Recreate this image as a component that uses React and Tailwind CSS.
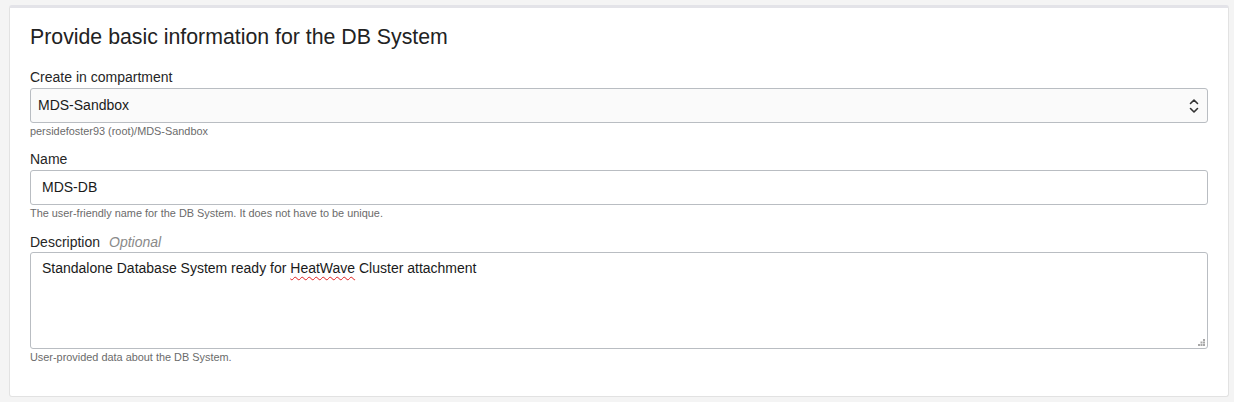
export default function App() {
  const font = { fontFamily: '"Liberation Sans", Arial, sans-serif' };
  return (
    <div className="w-[1234px] h-[402px] bg-[#f4f4f4] pt-[5px] pl-[9px]" style={font}>
      <div className="w-[1220px] h-[392px] bg-white border border-[#e2e2e2] border-t-[3px] border-t-[#e3e3e8] rounded-[3px] px-[20px] pt-[17px]">
        <h2 className="text-[21.3px] leading-[24px] text-[#222] font-normal">Provide basic information for the DB System</h2>

        <div className="mt-[19px] text-[14px] leading-[18px] text-[#262626]">Create in compartment</div>
        <div className="mt-[2px] h-[35px] border border-[#b9bdc2] rounded-[3px] bg-[#fafafa] flex items-center justify-between pl-[7px] pr-[8px]">
          <span className="text-[14px] text-[#1a1a1a]">MDS-Sandbox</span>
          <svg width="10" height="16" viewBox="0 0 10 16" fill="none" stroke="#333" strokeWidth="1.6" strokeLinecap="round" strokeLinejoin="round">
            <path d="M1.5 5.5 L5 2 L8.5 5.5" />
            <path d="M1.5 10.5 L5 14 L8.5 10.5" />
          </svg>
        </div>
        <div className="mt-[2px] text-[10.9px] leading-[13px] text-[#6b6b6b]">persidefoster93 (root)/MDS-Sandbox</div>

        <div className="mt-[12px] text-[14px] leading-[18px] text-[#262626]">Name</div>
        <div className="mt-[2px] h-[35px] border border-[#b9bdc2] rounded-[3px] bg-white flex items-center pl-[11px]">
          <span className="text-[14px] text-[#1a1a1a]">MDS-DB</span>
        </div>
        <div className="mt-[2px] text-[10.9px] leading-[13px] text-[#6b6b6b]">The user-friendly name for the DB System. It does not have to be unique.</div>

        <div className="mt-[13px] text-[14px] leading-[18px] text-[#262626] flex items-baseline gap-[9px]">
          <span>Description</span>
          <span className="italic text-[#8a8a8a]">Optional</span>
        </div>
        <div className="relative mt-[1px] h-[97px] border border-[#b9bdc2] rounded-[3px] bg-white pl-[11px] pt-[3px]">
          <span className="text-[14px] leading-[18px] text-[#1a1a1a]">
            Standalone Database System ready for{" "}
            <span className="underline decoration-wavy decoration-[#e02020] decoration-[1px] underline-offset-[3px]">HeatWave</span>{" "}
            Cluster attachment
          </span>
          <svg className="absolute right-[2px] bottom-[2px]" width="7" height="7" viewBox="0 0 7 7" fill="#a8a8a8">
            <rect x="5" y="0" width="2" height="2" />
            <rect x="2.5" y="2.5" width="2" height="2" />
            <rect x="5" y="2.5" width="2" height="2" />
            <rect x="0" y="5" width="2" height="2" />
            <rect x="2.5" y="5" width="2" height="2" />
            <rect x="5" y="5" width="2" height="2" />
          </svg>
        </div>
        <div className="mt-[2px] text-[10.9px] leading-[13px] text-[#6b6b6b]">User-provided data about the DB System.</div>
      </div>
    </div>
  );
}
